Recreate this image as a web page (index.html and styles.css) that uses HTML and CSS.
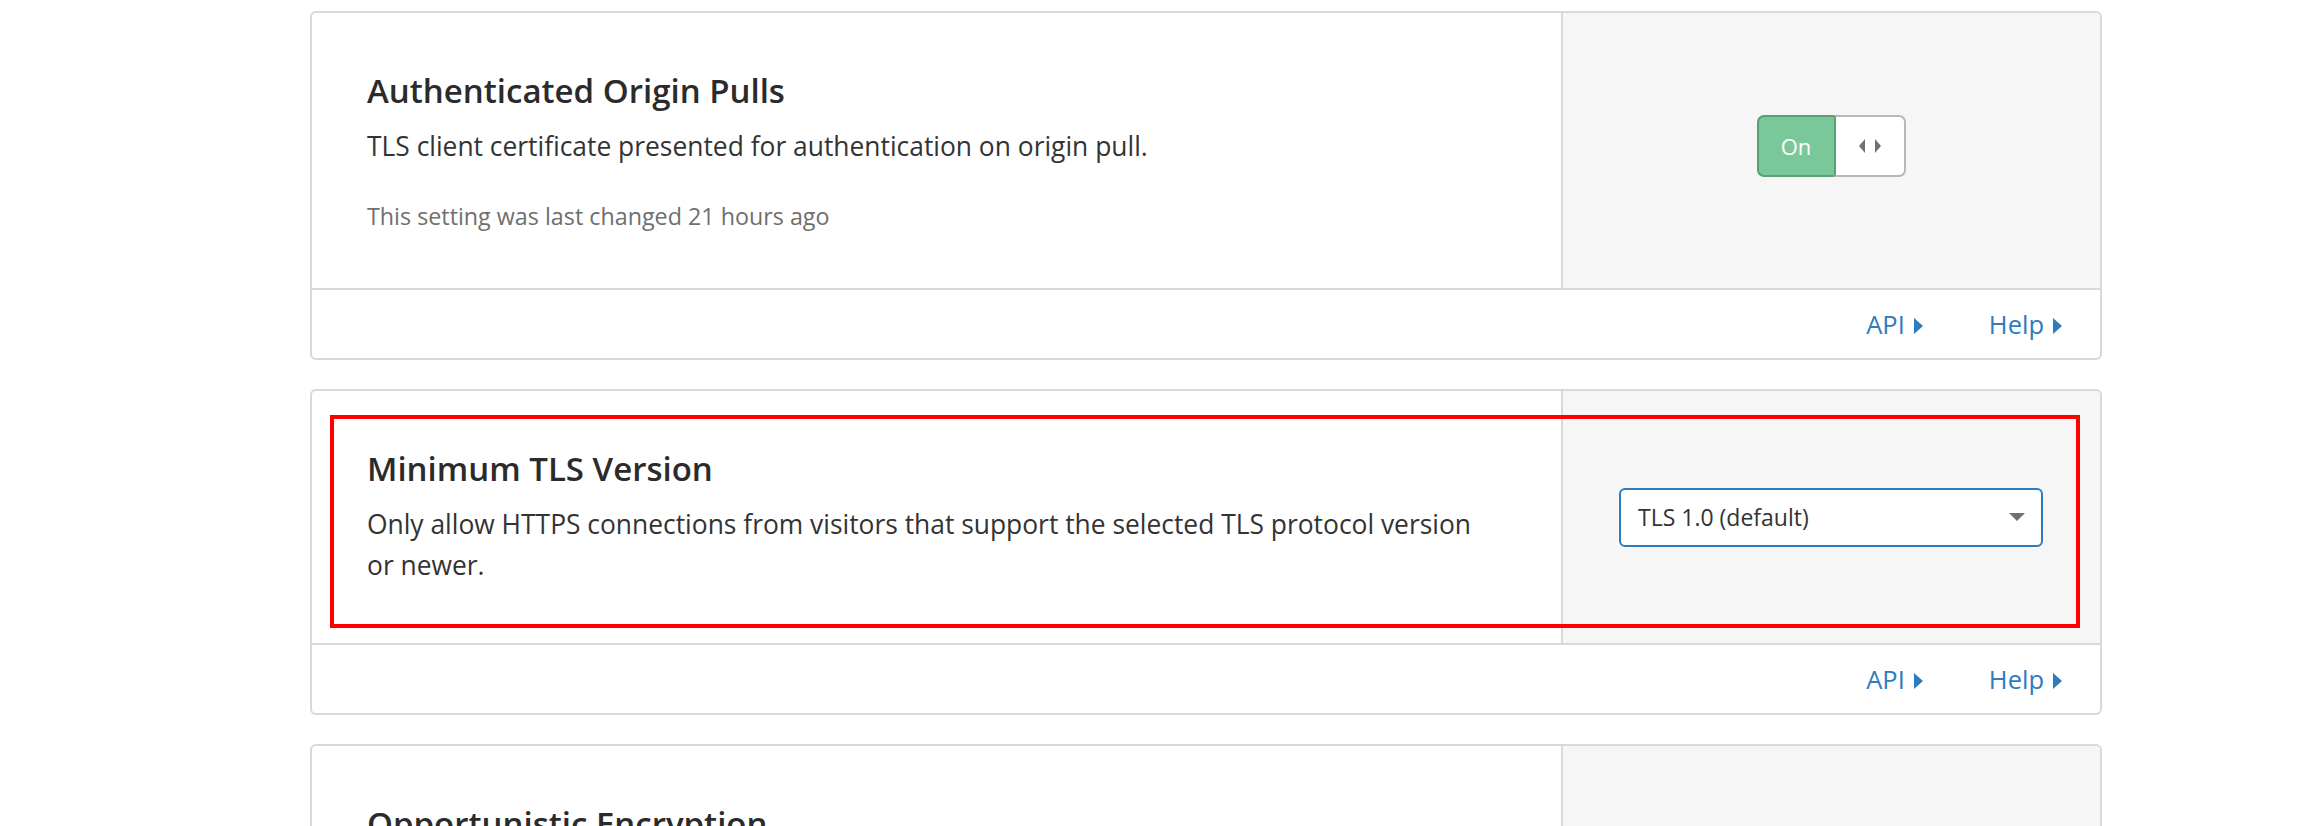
FILE: index.html
```html
<!DOCTYPE html>
<html lang="en">
<head>
<meta charset="utf-8">
<title>SSL/TLS settings</title>
<link rel="stylesheet" href="styles.css">
</head>
<body>
<main class="page">
  <section class="card">
    <div class="card-body">
      <div class="card-main">
        <h3 class="card-title">Authenticated Origin Pulls</h3>
        <p class="card-desc">TLS client certificate presented for authentication on origin pull.</p>
        <p class="card-meta">This setting was last changed 21 hours ago</p>
      </div>
      <div class="card-control">
        <div class="toggle">
          <span class="toggle-on">On</span>
          <span class="toggle-handle">
            <svg width="22" height="14" viewBox="0 0 22 14"><path d="M6 0 L0 7 L6 14 Z" fill="#6d7278"/><path d="M16 0 L22 7 L16 14 Z" fill="#6d7278"/></svg>
          </span>
        </div>
      </div>
    </div>
    <div class="card-footer">
      <a class="foot-link" href="#">API<span class="tri"></span></a>
      <a class="foot-link" href="#">Help<span class="tri"></span></a>
    </div>
  </section>

  <section class="card card-marked">
    <div class="card-body">
      <div class="card-main">
        <h3 class="card-title">Minimum TLS Version</h3>
        <p class="card-desc">Only allow HTTPS connections from visitors that support the selected TLS protocol version or newer.</p>
      </div>
      <div class="card-control">
        <div class="select">
          <span class="select-value">TLS 1.0 (default)</span>
          <span class="select-caret"></span>
        </div>
      </div>
    </div>
    <div class="card-footer">
      <a class="foot-link" href="#">API<span class="tri"></span></a>
      <a class="foot-link" href="#">Help<span class="tri"></span></a>
    </div>
    <div class="highlight"></div>
  </section>

  <section class="card">
    <div class="card-body">
      <div class="card-main">
        <h3 class="card-title">Opportunistic Encryption</h3>
        <p class="card-desc">Opportunistic Encryption allows browsers to benefit from the improved performance of HTTP/2 by letting them know that your site is available over an encrypted connection.</p>
      </div>
      <div class="card-control">
        <div class="toggle">
          <span class="toggle-on">On</span>
          <span class="toggle-handle">
            <svg width="22" height="14" viewBox="0 0 22 14"><path d="M6 0 L0 7 L6 14 Z" fill="#6d7278"/><path d="M16 0 L22 7 L16 14 Z" fill="#6d7278"/></svg>
          </span>
        </div>
      </div>
    </div>
  </section>
</main>
</body>
</html>
```

FILE: styles.css
```css
* { box-sizing: border-box; }

html, body {
  margin: 0;
  padding: 0;
  background: #ffffff;
}

body {
  font-family: "Open Sans", "Noto Sans", "Liberation Sans", sans-serif;
  color: #333333;
}

.page {
  width: 1792px;
  margin-left: 310px;
  padding-top: 11px;
}

.card {
  position: relative;
  border: 2px solid #d9d9d9;
  border-radius: 6px;
  margin-bottom: 29px;
  overflow: hidden;
  background: #ffffff;
}

.card-body {
  display: grid;
  grid-template-columns: 1251px 1fr;
}

.card-main {
  padding: 58px 56px 57px 55px;
  border-right: 2px solid #d9d9d9;
}

.card-title {
  margin: 0;
  font-size: 33px;
  line-height: 40px;
  font-weight: 600;
  color: #2b2b2b;
}

.card-desc {
  margin: 15px 0 0;
  max-width: 1118px;
  font-size: 26.4px;
  line-height: 41px;
  color: #333333;
}

.card-meta {
  margin: 34px 0 0;
  font-size: 23.3px;
  line-height: 30px;
  color: #6f6f6f;
}

.card-control {
  background: #f6f6f6;
  display: flex;
  align-items: center;
  justify-content: center;
  padding: 0 57px 0 56px;
}

.toggle {
  display: flex;
  width: 149px;
  height: 62px;
  margin-top: -10px;
}

.toggle-on {
  width: 77px;
  background: #7ac89a;
  border: 2px solid #5c9f77;
  border-right: none;
  border-radius: 7px 0 0 7px;
  color: #ffffff;
  font-size: 22px;
  display: flex;
  align-items: center;
  justify-content: center;
}

.toggle-handle {
  flex: 1;
  background: #ffffff;
  border: 2px solid #b4b9bc;
  border-left: 2px solid #5c9f77;
  border-radius: 0 7px 7px 0;
  display: flex;
  align-items: center;
  justify-content: center;
}

.select {
  width: 100%;
  height: 59px;
  border: 2px solid #2f7bbf;
  border-radius: 6px;
  background: #ffffff;
  display: flex;
  align-items: center;
  justify-content: space-between;
  padding: 0 16px 0 17px;
}

.select-value {
  font-size: 23px;
  color: #333333;
}

.select-caret {
  width: 0;
  height: 0;
  border-left: 8.5px solid transparent;
  border-right: 8.5px solid transparent;
  border-top: 8px solid #6d7278;
}

.card-footer {
  border-top: 2px solid #d9d9d9;
  height: 70px;
  display: flex;
  justify-content: flex-end;
  align-items: center;
  gap: 66px;
  padding-right: 38px;
}

.foot-link {
  color: #2f7bbf;
  text-decoration: none;
  font-size: 25.5px;
  display: flex;
  align-items: center;
  gap: 9px;
}

.tri {
  width: 0;
  height: 0;
  border-top: 8px solid transparent;
  border-bottom: 8px solid transparent;
  border-left: 9px solid #2f7bbf;
  margin-top: 3px;
}

.highlight {
  position: absolute;
  left: 18px;
  top: 24px;
  width: 1750px;
  height: 213px;
  border: 4px solid #ff0000;
  pointer-events: none;
}
```
